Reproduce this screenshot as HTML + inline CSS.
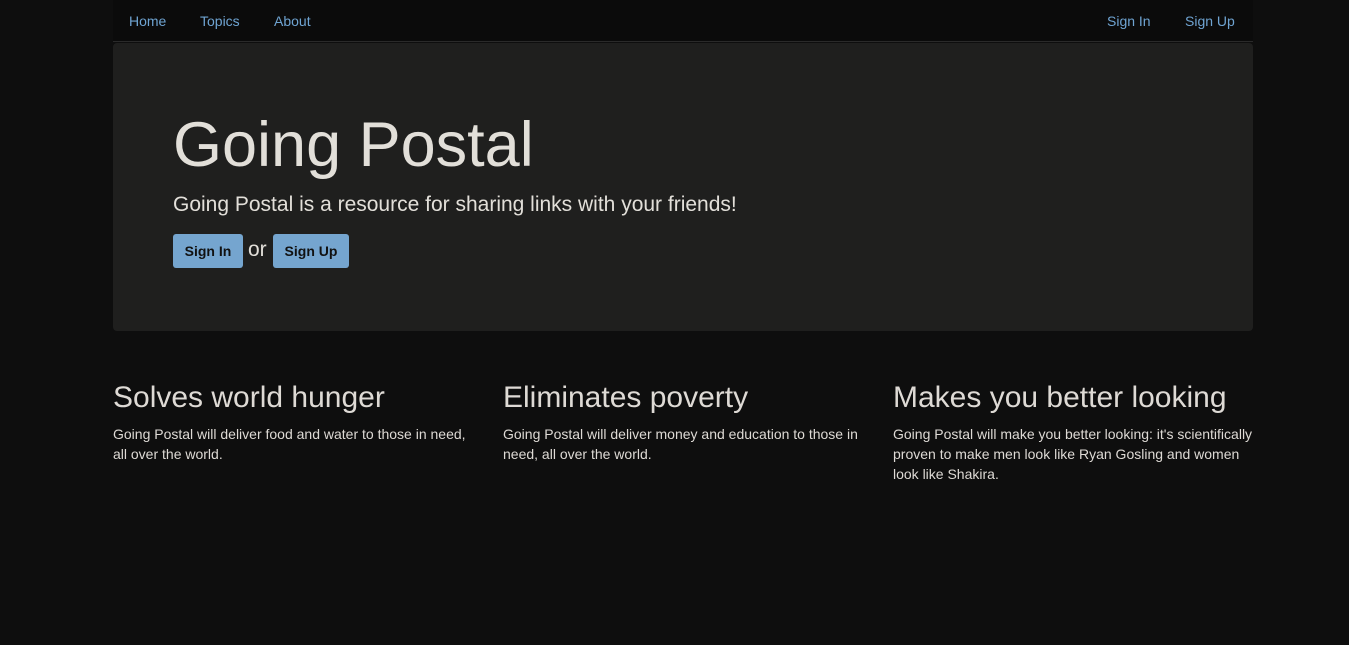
<!DOCTYPE html>
<html><head><style>
body{margin:0;background:#0e0e0e;font-family:"Liberation Sans",sans-serif;color:#dedad5;}
.nav{position:absolute;left:113px;top:0;width:1140px;height:41px;background:#0b0b0b;border-bottom:1px solid #2a2a2a;}
.nav a{position:absolute;top:13px;font-size:14px;color:#6fa4d2;text-decoration:none;}
.jumbo{position:absolute;left:113px;top:43px;width:1140px;height:288px;background:#1f1f1e;border-radius:4px;}
h1{position:absolute;left:60px;top:67px;margin:0;font-size:63px;font-weight:normal;color:#e2dfd9;line-height:70px;}
.lead{position:absolute;left:60px;top:150px;font-size:21px;color:#e2dfd9;}
.btn{position:absolute;top:191px;height:34px;background:#75a5cf;border-radius:3px;font-size:14px;font-weight:bold;color:#111;line-height:34px;text-align:center;}
.or{position:absolute;left:135px;top:195px;font-size:21px;color:#e2dfd9;}
.col{position:absolute;top:380px;width:365px;}
.col h2{margin:0;font-size:30px;font-weight:normal;color:#dedad5;line-height:36px;}
.col p{margin:8px 0 0;font-size:14px;line-height:20px;color:#dedad5;}
</style></head><body>
<div class="nav">
<a style="left:16px">Home</a><a style="left:87px">Topics</a><a style="left:161px">About</a>
<a style="left:994px">Sign In</a><a style="left:1072px">Sign Up</a>
</div>
<div class="jumbo">
<h1>Going Postal</h1>
<div class="lead">Going Postal is a resource for sharing links with your friends!</div>
<div class="btn" style="left:60px;width:70px">Sign In</div>
<div class="or">or</div>
<div class="btn" style="left:160px;width:76px">Sign Up</div>
</div>
<div class="col" style="left:113px"><h2>Solves world hunger</h2><p>Going Postal will deliver food and water to those in need, all over the world.</p></div>
<div class="col" style="left:503px"><h2>Eliminates poverty</h2><p>Going Postal will deliver money and education to those in need, all over the world.</p></div>
<div class="col" style="left:893px"><h2>Makes you better looking</h2><p>Going Postal will make you better looking: it's scientifically proven to make men look like Ryan Gosling and women look like Shakira.</p></div>
</body></html>
